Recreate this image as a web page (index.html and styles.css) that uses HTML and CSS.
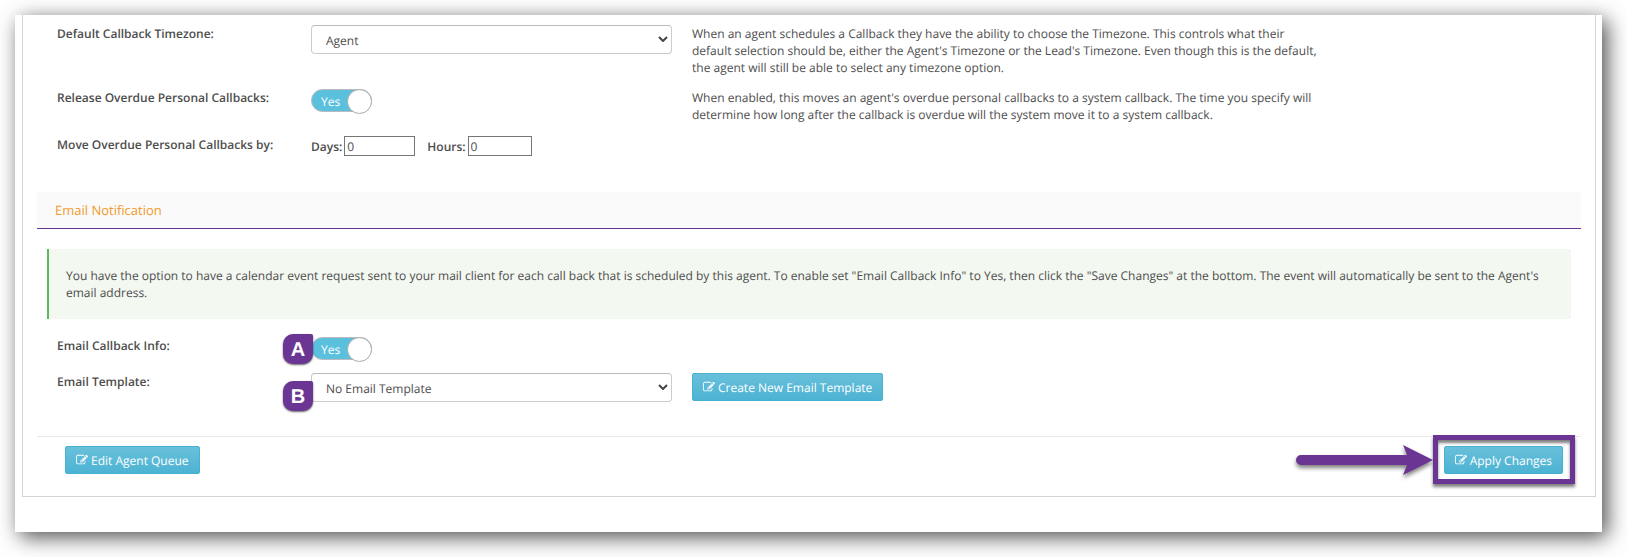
FILE: index.html
```html
<!DOCTYPE html>
<html lang="en">
<head>
  <meta charset="UTF-8">
  <meta name="viewport" content="width=device-width, initial-scale=1.0">
  <title>Agent Queue</title>
  <link rel="stylesheet" href="styles.css">
</head>
<body>
  <!-- shared icons -->
  <svg class="icon-defs" width="0" height="0" aria-hidden="true">
    <symbol id="icon-edit" viewBox="0 0 1792 1792">
      <path d="M888 1184l116-116-152-152-116 116v56h96v96h56zm440-720q-16-16-33 1l-350 350q-17 17-1 33t33-1l350-350q17-17 1-33zm80 594v190q0 119-84.500 203.500t-203.500 84.500h-832q-119 0-203.500-84.500t-84.500-203.500v-832q0-119 84.500-203.500t203.500-84.500h832q63 0 117 25 15 7 18 23 3 17-9 29l-49 49q-14 14-32 8-23-6-45-6h-832q-66 0-113 47t-47 113v832q0 66 47 113t113 47h832q66 0 113-47t47-113v-126q0-13 9-22l64-64q15-15 35-7t20 29zm-96-738l288 288-672 672h-288v-288zm444 132l-92 92-288-288 92-92q28-28 68-28t68 28l152 152q28 28 28 68t-28 68z"/>
    </symbol>
    <symbol id="icon-chevron" viewBox="0 0 10 6">
      <path d="M1 1l4 4 4-4" fill="none" stroke="currentColor" stroke-width="2"/>
    </symbol>
  </svg>

  <main class="sheet">
    <form class="panel" onsubmit="return false">
      <div class="fields">
        <div class="row">
          <label class="row-label" for="timezone">Default Callback Timezone:</label>
          <div class="row-control">
            <div class="select-wrap">
              <select class="select" id="timezone">
                <option>Agent</option>
                <option>Lead</option>
              </select>
              <svg class="select-arrow"><use href="#icon-chevron"/></svg>
            </div>
          </div>
          <p class="row-help">When an agent schedules a Callback they have the ability to choose the Timezone. This controls what their default selection should be, either the Agent's Timezone or the Lead's Timezone. Even though this is the default, the agent will still be able to select any timezone option.</p>
        </div>

        <div class="row">
          <label class="row-label" for="release">Release Overdue Personal Callbacks:</label>
          <div class="row-control">
            <label class="toggle">
              <input class="toggle-input" type="checkbox" id="release" checked>
              <span class="toggle-text">Yes</span>
            </label>
          </div>
          <p class="row-help">When enabled, this moves an agent's overdue personal callbacks to a system callback. The time you specify will determine how long after the callback is overdue will the system move it to a system callback.</p>
        </div>

        <div class="row">
          <span class="row-label">Move Overdue Personal Callbacks by:</span>
          <div class="row-control durations">
            <label class="duration-label" for="days">Days:</label>
            <input class="duration days" type="text" id="days" value="0">
            <label class="duration-label" for="hours">Hours:</label>
            <input class="duration hours" type="text" id="hours" value="0">
          </div>
        </div>
      </div>

      <h2 class="section-title">Email Notification</h2>

      <div class="fields">
        <p class="note">You have the option to have a calendar event request sent to your mail client for each call back that is scheduled by this agent. To enable set "Email Callback Info" to Yes, then click the "Save Changes" at the bottom. The event will automatically be sent to the Agent's email address.</p>

        <div class="row">
          <label class="row-label" for="email-info">Email Callback Info:</label>
          <div class="row-control">
            <label class="toggle">
              <input class="toggle-input" type="checkbox" id="email-info" checked>
              <span class="toggle-text">Yes</span>
            </label>
            <span class="badge badge-a">A</span>
          </div>
        </div>

        <div class="row">
          <label class="row-label" for="template">Email Template:</label>
          <div class="row-control">
            <div class="select-wrap">
              <select class="select" id="template">
                <option>No Email Template</option>
              </select>
              <svg class="select-arrow"><use href="#icon-chevron"/></svg>
            </div>
            <span class="badge badge-b">B</span>
          </div>
          <div class="row-action">
            <button class="btn" type="button"><svg class="btn-icon"><use href="#icon-edit"/></svg>Create New Email Template</button>
          </div>
        </div>
      </div>

      <div class="actions">
        <button class="btn" type="button"><svg class="btn-icon"><use href="#icon-edit"/></svg>Edit Agent Queue</button>
        <div class="callout">
          <svg class="callout-arrow" viewBox="0 0 138 32">
            <path d="M6 11H112L108 1L138 16L108 31L112 21H6A5 5 0 0 1 6 11Z"/>
          </svg>
          <button class="btn" type="submit"><svg class="btn-icon"><use href="#icon-edit"/></svg>Apply Changes</button>
        </div>
      </div>
    </form>
  </main>
</body>
</html>
```
FILE: styles.css
```css
* {
  box-sizing: border-box;
}

body {
  margin: 0;
  padding: 15px 25px 25px 15px;
  background-color: #fff;
  color: #4d4d4d;
  font-family: "Open Sans", sans-serif;
  font-size: 12px;
  line-height: 17px;
  text-rendering: geometricPrecision;
}

p,
h2 {
  margin: 0;
}

.icon-defs {
  position: absolute;
}

.sheet {
  padding: 0 6px 35px 7px;
  background-color: #fff;
  box-shadow: 5px 5px 20px rgba(0, 0, 0, 0.7);
}

.panel {
  padding: 10px 14px 22px;
  border: 1px solid #d4d4d4;
  border-top: none;
}

.fields {
  padding: 0 10px;
}

/* 12 column rows: label 2, control 3, help 7 */
.row {
  display: grid;
  grid-template-columns: 2fr 3fr 7fr;
  align-items: start;
  margin-bottom: 13px;
}

.row-label,
.row-control,
.row-help,
.row-action {
  padding: 0 10px;
}

.row-label,
.duration-label {
  font-weight: 600;
}

.row-control {
  position: relative;
}

.row-help {
  max-width: 650px;
}

/* select */
.select-wrap {
  position: relative;
}

.select {
  display: block;
  appearance: none;
  width: 100%;
  height: 29px;
  padding: 2px 30px 0 14px;
  border: 1px solid #ccc;
  border-top-color: #bbb;
  border-radius: 4px;
  background-color: #fff;
  color: #4d4d4d;
  font: inherit;
  text-rendering: inherit;
}

.select-arrow {
  position: absolute;
  top: 11px;
  right: 4px;
  width: 10px;
  height: 6px;
  color: #444;
  pointer-events: none;
}

/* yes / no switch */
.toggle {
  display: flex;
  position: relative;
  width: 61px;
  height: 23px;
}

.toggle-input {
  appearance: none;
  width: 100%;
  height: 100%;
  margin: 0;
  border: 1px solid #bbb;
  border-radius: 12px;
  background-color: #5bc0de;
  cursor: pointer;
}

.toggle-input::after {
  content: "";
  position: absolute;
  top: 0;
  right: 0;
  width: 23px;
  height: 23px;
  border: 1px solid #aaa;
  border-radius: 50%;
  background-color: #fff;
}

.toggle-text {
  position: absolute;
  top: 4px;
  left: 10px;
  color: #fff;
  font-weight: 500;
  pointer-events: none;
}

/* days and hours */
.durations {
  display: flex;
  align-items: center;
  gap: 2px;
}

.duration {
  height: 20px;
  padding: 1px 2px;
  border: 1px solid #767676;
  background-color: #fff;
  color: #4d4d4d;
  font: inherit;
  text-rendering: inherit;
}

.days {
  width: 71px;
  margin-right: 10px;
}

.hours {
  width: 64px;
}

.section-title {
  margin: 36px 0 20px;
  padding: 10px 18px 9px;
  border-bottom: 1px solid #6b3594;
  background-color: #fafafa;
  color: #f19a2c;
  font-size: 13px;
  font-weight: 400;
}

.note {
  margin-bottom: 18px;
  padding: 18px 17px;
  border-left: 2px solid #5cb85c;
  background-color: #f3f8f1;
}

/* lettered markers */
.badge {
  position: absolute;
  left: -18px;
  width: 30px;
  height: 30px;
  border-radius: 10px 2px 10px 10px;
  background-color: #6b3594;
  box-shadow: 0 1px 2px rgba(0, 0, 0, 0.6);
  color: #fff;
  font-family: "Liberation Sans", sans-serif;
  font-size: 20px;
  font-weight: 700;
  line-height: 32px;
  text-align: center;
}

.badge-a {
  top: -3px;
}

.badge-b {
  top: 8px;
}

/* buttons */
.btn {
  display: inline-flex;
  align-items: center;
  gap: 3px;
  height: 28px;
  padding: 0 10px;
  border: 1px solid #46b1d1;
  border-radius: 2px;
  background-image: linear-gradient(#68c0da, #4db3d3);
  color: #fff;
  font: inherit;
  text-rendering: inherit;
  cursor: pointer;
}

.btn-icon {
  width: 12px;
  height: 12px;
  fill: currentColor;
}

.actions {
  display: flex;
  justify-content: space-between;
  margin-top: 34px;
  padding: 9px 18px 0 28px;
  border-top: 1px solid #e8e8e8;
}

.callout {
  position: relative;
}

.callout::before {
  content: "";
  position: absolute;
  inset: -11px -12px -10px -11px;
  border: 5px solid #6b3594;
  box-shadow: 0 3px 3px rgba(0, 0, 0, 0.5), inset 0 3px 3px rgba(0, 0, 0, 0.5);
  pointer-events: none;
}

.callout-arrow {
  position: absolute;
  top: -2px;
  right: calc(100% + 11px);
  width: 138px;
  height: 32px;
  fill: #6b3594;
  filter: drop-shadow(0 3px 2px rgba(0, 0, 0, 0.5));
}
```
